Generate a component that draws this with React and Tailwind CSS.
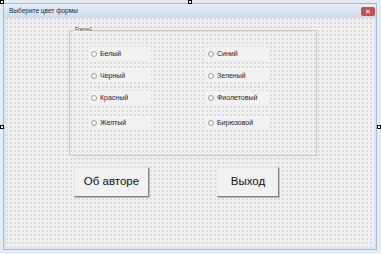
import React from 'react';

const dots =
  'bg-[#f0f0f0] bg-[radial-gradient(circle_at_1px_1px,#a4a4a4_0.5px,transparent_0.8px)] bg-[size:4px_4px]';

const Radio = ({ label }) => (
  <div className="flex items-center h-[13px] w-[62px] bg-[#f2f2f2] gap-[3px] pl-[2px]">
    <span className="w-[6px] h-[6px] rounded-full border border-[#9a9a9a] bg-white shrink-0" />
    <span className="text-[7px] leading-none text-[#222]">{label}</span>
  </div>
);

const Button = ({ label, w }) => (
  <div
    className={`h-[30px] ${w} bg-[#f1f1f1] border border-[#e2e2e2] border-r-[#808080] border-b-[#808080] shadow-[1px_1px_0_#c0c0c0] flex items-center justify-center text-[11.5px] text-[#111]`}
  >
    {label}
  </div>
);

export default function App() {
  return (
    <div
      className="w-[381px] h-[254px] relative overflow-hidden bg-[#e4ebf4]"
      style={{ fontFamily: '"Liberation Sans", Arial, sans-serif' }}
    >
      {/* form window */}
      <div className="absolute left-[3px] top-[3px] w-[374px] h-[247px] flex flex-col border border-[#a9bbd0] bg-[#dbe5f1]">
        <div className="h-[14px] flex items-center justify-between pl-[5px] pr-[1px] bg-[linear-gradient(#e6eef8,#cddcee)]">
          <span className="text-[6.5px] text-[#1b2a3a] leading-none">Выберите цвет формы</span>
          <span className="w-[14px] h-[9px] bg-[#c9504c] rounded-[2px] flex items-center justify-center text-white text-[7px] leading-none">
            ✕
          </span>
        </div>
        <div className={`flex-1 mx-[2px] mb-[2px] ${dots} flex flex-col`}>
          {/* frame */}
          <div className="ml-[63px] mt-[12px] w-[248px] h-[126px] border border-[#c8c8c8] relative">
            <span className="absolute -top-[4px] left-[4px] px-[1px] bg-[#f0f0f0] text-[5px] leading-none text-[#333]">
              Frame1
            </span>
            <div className="grid grid-cols-[117px_auto] pl-[19px] pt-[16px] gap-y-[9px]">
              <Radio label="Белый" />
              <Radio label="Синий" />
              <Radio label="Черный" />
              <Radio label="Зеленый" />
              <Radio label="Красный" />
              <Radio label="Фиолетовый" />
              <div className="mt-[3px]"><Radio label="Желтый" /></div>
              <div className="mt-[3px]"><Radio label="Бирюзовой" /></div>
            </div>
          </div>
          <div className="flex ml-[68px] mt-[11px] gap-[68px]">
            <Button label="Об авторе" w="w-[75px]" />
            <Button label="Выход" w="w-[62px]" />
          </div>
        </div>
      </div>
      {/* selection handles */}
      <div className="absolute left-0 top-0 w-[4px] h-[4px] bg-white border border-black" />
      <div className="absolute left-[188px] top-0 w-[4px] h-[4px] bg-white border border-black" />
      <div className="absolute right-0 top-[125px] w-[4px] h-[4px] bg-white border border-black" />
      <div className="absolute left-0 top-[125px] w-[4px] h-[4px] bg-white border border-black" />
    </div>
  );
}
